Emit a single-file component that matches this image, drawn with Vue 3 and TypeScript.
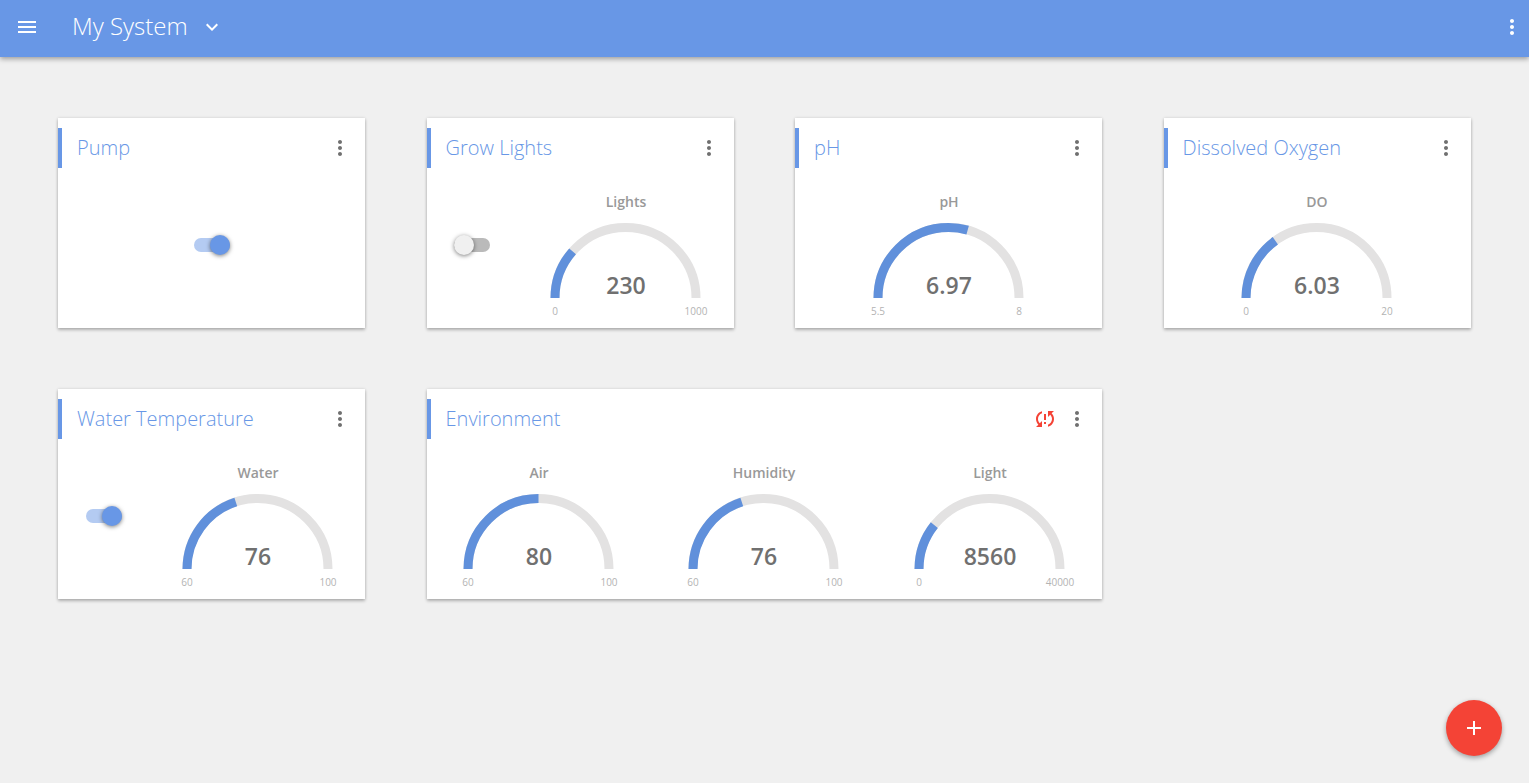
<script setup lang="ts">
import { ref } from 'vue'

interface Gauge {
  title: string
  value: string
  min: number
  max: number
}

interface Device {
  name: string
  wide?: boolean
  offline?: boolean
  on?: boolean
  gauges: Gauge[]
}

const devices = ref<Device[]>([
  { name: 'Pump', on: true, gauges: [] },
  { name: 'Grow Lights', on: false, gauges: [{ title: 'Lights', value: '230', min: 0, max: 1000 }] },
  { name: 'pH', gauges: [{ title: 'pH', value: '6.97', min: 5.5, max: 8 }] },
  { name: 'Dissolved Oxygen', gauges: [{ title: 'DO', value: '6.03', min: 0, max: 20 }] },
  { name: 'Water Temperature', on: true, gauges: [{ title: 'Water', value: '76', min: 60, max: 100 }] },
  {
    name: 'Environment',
    wide: true,
    offline: true,
    gauges: [
      { title: 'Air', value: '80', min: 60, max: 100 },
      { title: 'Humidity', value: '76', min: 60, max: 100 },
      { title: 'Light', value: '8560', min: 0, max: 40000 },
    ],
  },
])

const arc = 'M9 130a70.5 70.5 0 0 1 141 0'

function dash(g: Gauge): string {
  const percent = ((Number(g.value) - g.min) / (g.max - g.min)) * 100
  return `${percent} 200`
}
</script>

<template>
  <div class="app">
    <header class="toolbar">
      <button class="icon-button" type="button" aria-label="Menu">
        <svg viewBox="0 0 24 24"><path d="M3 18h18v-2H3v2zm0-5h18v-2H3v2zm0-7v2h18V6H3z" /></svg>
      </button>
      <h1 class="system">My System</h1>
      <button class="icon-button" type="button" aria-label="Choose system">
        <svg viewBox="0 0 24 24"><path d="M16.59 8.59L12 13.17 7.41 8.59 6 10l6 6 6-6z" /></svg>
      </button>
      <button class="icon-button last" type="button" aria-label="More options">
        <svg viewBox="0 0 24 24"><path d="M12 8c1.1 0 2-.9 2-2s-.9-2-2-2-2 .9-2 2 .9 2 2 2zm0 2c-1.1 0-2 .9-2 2s.9 2 2 2 2-.9 2-2-.9-2-2-2zm0 6c-1.1 0-2 .9-2 2s.9 2 2 2 2-.9 2-2-.9-2-2-2z" /></svg>
      </button>
    </header>

    <main class="grid">
      <section v-for="device in devices" :key="device.name" class="card" :class="{ wide: device.wide }">
        <div class="card-head">
          <h2 class="card-title">{{ device.name }}</h2>
          <button v-if="device.offline" class="icon-button alert" type="button" aria-label="Sync problem">
            <svg viewBox="0 0 24 24"><path d="M3 12c0 2.21.91 4.2 2.36 5.64L3 20h6v-6l-2.24 2.24C5.68 15.15 5 13.66 5 12c0-2.61 1.67-4.83 4-5.65V4.26C5.55 5.15 3 8.27 3 12zm8 5h2v-2h-2v2zM21 4h-6v6l2.24-2.24C18.32 8.85 19 10.34 19 12c0 2.61-1.67 4.83-4 5.65v2.09c3.45-.89 6-4.01 6-7.74 0-2.21-.91-4.2-2.36-5.64L21 4zm-10 9h2V7h-2v6z" /></svg>
          </button>
          <button class="icon-button" type="button" :aria-label="`${device.name} options`">
            <svg viewBox="0 0 24 24"><path d="M12 8c1.1 0 2-.9 2-2s-.9-2-2-2-2 .9-2 2 .9 2 2 2zm0 2c-1.1 0-2 .9-2 2s.9 2 2 2 2-.9 2-2-.9-2-2-2zm0 6c-1.1 0-2 .9-2 2s.9 2 2 2 2-.9 2-2-.9-2-2-2z" /></svg>
          </button>
        </div>
        <div class="card-body">
          <input
            v-if="device.on !== undefined"
            v-model="device.on"
            class="switch"
            type="checkbox"
            role="switch"
            :aria-label="`${device.name} power`"
          />
          <svg v-for="g in device.gauges" :key="g.title" class="gauge" viewBox="0 0 160 154">
            <text class="gauge-title" x="80" y="39">{{ g.title }}</text>
            <path class="track" :d="arc" />
            <path class="level" :d="arc" pathLength="100" :stroke-dasharray="dash(g)" />
            <text class="gauge-value" x="80" y="126">{{ g.value }}</text>
            <text class="gauge-limit" x="9" y="147">{{ g.min }}</text>
            <text class="gauge-limit" x="150" y="147">{{ g.max }}</text>
          </svg>
        </div>
      </section>
    </main>

    <button class="fab" type="button" aria-label="Add device">
      <svg viewBox="0 0 24 24"><path d="M19 13h-6v6h-2v-6H5v-2h6V5h2v6h6v2z" /></svg>
    </button>
  </div>
</template>

<style>
body {
  margin: 0;
  background: #f0f0f0;
}
</style>

<style scoped>
.app {
  font-family: 'Open Sans', 'Noto Sans', sans-serif;
}

.toolbar {
  display: flex;
  align-items: center;
  box-sizing: border-box;
  height: 57px;
  padding: 0 5px 3px 15px;
  background: #6897e6;
  color: #fff;
  box-shadow: 0 2px 5px rgba(0, 0, 0, 0.35);
}

.system {
  margin: 0 12px 0 33px;
  padding-bottom: 2px;
  font-size: 24px;
  font-weight: 300;
  line-height: 32px;
}

.icon-button {
  display: block;
  flex: none;
  width: 24px;
  height: 24px;
  padding: 0;
  border: 0;
  background: none;
  color: inherit;
  cursor: pointer;
}

.icon-button svg,
.fab svg {
  display: block;
  width: 24px;
  height: 24px;
  fill: currentColor;
}

.last {
  margin-left: auto;
}

.grid {
  display: grid;
  grid-template-columns: repeat(4, minmax(0, 1fr));
  gap: 61px 4vw;
  padding: 61px 58px;
}

.card {
  padding: 10px 0 6px;
  background: #fff;
  box-shadow: 0 2px 3px rgba(0, 0, 0, 0.25), 0 0 3px rgba(0, 0, 0, 0.12);
}

.wide {
  grid-column: span 2;
}

.card-head {
  display: flex;
  align-items: center;
  gap: 8px;
  height: 40px;
  padding: 0 13px 0 15px;
  border-left: 4px solid #6897e6;
  color: #707070;
}

.card-title {
  flex: 1;
  margin: 0;
  color: #6897e6;
  font-size: 20px;
  font-weight: 300;
  line-height: 40px;
  white-space: nowrap;
}

.alert {
  color: #f44336;
}

.card-body {
  display: flex;
  align-items: center;
  justify-content: space-around;
  height: 154px;
}

.gauge {
  flex: none;
  width: 160px;
  height: 154px;
  overflow: visible;
  text-anchor: middle;
}

.track,
.level {
  fill: none;
  stroke-width: 9px;
}

.track {
  stroke: #e3e2e2;
}

.level {
  stroke: #6090db;
}

.gauge-title {
  fill: #999;
  font-size: 14px;
  font-weight: 600;
}

.gauge-value {
  fill: #707070;
  font-size: 23px;
  font-weight: 600;
}

.gauge-limit {
  fill: #b3b3b3;
  font-size: 10px;
}

.switch {
  display: flex;
  align-items: center;
  flex: none;
  width: 36px;
  height: 14px;
  margin: 0;
  appearance: none;
  border-radius: 7px;
  background: #bababa;
  cursor: pointer;
}

.switch::before {
  width: 20px;
  height: 20px;
  border-radius: 50%;
  background: #f0f0f0;
  box-shadow: 0 1px 4px rgba(0, 0, 0, 0.5);
  content: '';
}

.switch:checked {
  justify-content: flex-end;
  background: #b4cbf2;
}

.switch:checked::before {
  background: #6897e6;
}

.fab {
  position: fixed;
  right: 27px;
  bottom: 27px;
  display: grid;
  place-items: center;
  width: 56px;
  height: 56px;
  padding: 0;
  border: 0;
  border-radius: 50%;
  background: #f44336;
  color: #fff;
  box-shadow: 0 2px 5px rgba(0, 0, 0, 0.35);
  cursor: pointer;
}
</style>
